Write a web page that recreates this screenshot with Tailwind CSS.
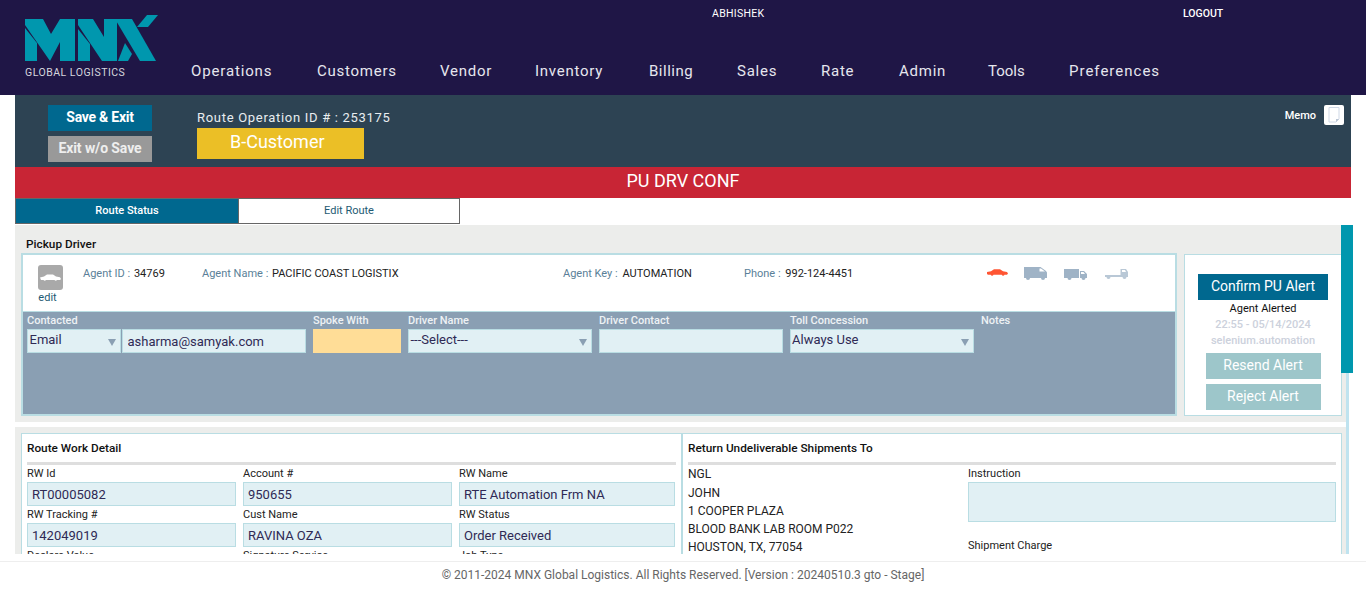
<!DOCTYPE html>
<html lang="en">
<head>
  <meta charset="UTF-8" />
  <title>Route Operation</title>
  <script src="https://cdn.jsdelivr.net/npm/@tailwindcss/browser@4"></script>
</head>
<body class="h-[589px] overflow-hidden bg-white font-[Roboto,sans-serif] text-[11px] text-[#222]">

  <!-- Top header -->
  <header class="h-[95px] bg-[#1f1646] flex text-white">
    <div class="w-[191px] pl-[24px] pt-[14px] shrink-0">
      <svg width="134" height="48" viewBox="24 14 134 48" class="block">
        <g fill="#0097ae">
          <polygon points="25,19 43,19 51,34 60,19 75,19 75,61 60,61 60,42 50,61 25,25" />
          <polygon points="25,28 37,43 37,61 25,61" />
          <polygon points="78,19 93,19 104,37 104,19 117,19 117,61 102,61 78,25" />
          <polygon points="78,29 90,44 90,61 78,61" />
          <polygon points="115,19 132,19 156,61 140,61" />
          <polygon points="125,43 132,54 128,61 118,61" />
          <polygon points="147,15 158,15 148,27 137,27" />
        </g>
      </svg>
      <div class="mt-[5px] ml-[1px] text-[10.5px] tracking-[0.5px] text-[#d5d5dd] leading-[12px] whitespace-nowrap">GLOBAL LOGISTICS</div>
    </div>
    <div class="flex-1 flex flex-col">
      <div class="flex h-[61px] pt-[7px] text-[10.5px] leading-[13px]">
        <span class="w-[992px] pl-[521px] tracking-[0.3px]">ABHISHEK</span>
        <span class="font-medium">LOGOUT</span>
      </div>
      <nav class="flex text-[15px] tracking-[0.75px] text-[#e6e6ee] leading-[20px]">
        <a href="#" class="w-[126px] tracking-[0.85px]">Operations</a>
        <a href="#" class="w-[123px]">Customers</a>
        <a href="#" class="w-[95px]">Vendor</a>
        <a href="#" class="w-[114px]">Inventory</a>
        <a href="#" class="w-[88px] tracking-[0.5px]">Billing</a>
        <a href="#" class="w-[84px]">Sales</a>
        <a href="#" class="w-[78px]">Rate</a>
        <a href="#" class="w-[89px]">Admin</a>
        <a href="#" class="w-[81px] tracking-[0px]">Tools</a>
        <a href="#" class="tracking-[1px]">Preferences</a>
      </nav>
    </div>
  </header>

  <div class="ml-[15px] w-[1336px]">
    <!-- Toolbar -->
    <div class="h-[72px] bg-[#2d4353] flex pl-[33px] pt-[10px] text-white">
      <div class="w-[104px] flex flex-col gap-[5px] shrink-0">
        <button class="h-[26px] pb-[2px] bg-[#00688f] text-[14px] font-bold tracking-[-0.25px]">Save &amp; Exit</button>
        <button class="h-[26px] pb-[2px] bg-[#999999] text-[14px] font-bold tracking-[-0.1px] text-[#eee]">Exit w/o Save</button>
      </div>
      <div class="ml-[45px] w-[200px]">
        <div class="text-[13px] tracking-[0.7px] leading-[16px] mt-[5px] whitespace-nowrap text-[#e8edf0]">Route Operation ID # : 253175</div>
        <div class="mt-[2px] h-[31px] w-[167px] bg-[#ebbf26] text-[18px] leading-[27px] pl-[33px]">B-Customer</div>
      </div>
      <div class="ml-auto mr-[7px] flex items-start gap-[8px]">
        <span class="text-[11px] font-medium leading-[21px]">Memo</span>
        <span class="w-[20px] h-[20px] bg-white rounded-[2px] flex items-center justify-center">
          <svg width="14" height="16" viewBox="0 0 14 16"><path d="M2 .5h10v11.500l-3 3H2z" fill="#fff" stroke="#cfd8e6"/><path d="M9 15l3-3H9z" fill="#bcc6d4"/></svg>
        </span>
      </div>
    </div>

    <div class="h-[31px] bg-[#c82535] text-white text-[18px] leading-[28px] text-center">PU DRV CONF</div>

    <!-- Tabs -->
    <div class="flex h-[26px] w-[445px] text-center leading-[23px]">
      <div class="w-[223px] bg-[#00688f] border-y border-l border-[#666] text-white font-medium">Route Status</div>
      <div class="flex-1 bg-white border border-[#666] text-[#1e5a73]">Edit Route</div>
    </div>
  </div>

  <!-- Scrolling content -->
  <div class="relative ml-[15px] w-[1334px] h-[329px] border-r-[3px] border-[#bfe3ef] mt-[1px]">
    <div class="h-full overflow-hidden">
      <section class="bg-[#ecedeb] h-[197px] pl-[6px] pr-[4px] flex flex-col">
        <div class="text-[11.800px] font-medium text-[#111] leading-[14px] pl-[5px] pt-[12px] h-[28px] shrink-0">Pickup Driver</div>
        <div class="flex gap-[7px]">
          <div class="w-[1156px] h-[163px] border-2 border-[#b9dde3] bg-white flex flex-col">
            <div class="h-[56px] relative flex shrink-0">
              <div class="w-[54px] pl-[15px] pt-[10px] shrink-0">
                <div class="w-[25px] h-[25px] rounded-[3px] bg-[#a9a9a9] flex items-center justify-center">
                  <svg width="21" height="7" viewBox="0 0 21 7"><path d="M0 3.500 4 2.500 7 .5h6l3 2 4 .8 1 1.700-1 1h-3a1.500 1.500 0 0 1-2.500 0H6a1.500 1.500 0 0 1-2.500 0H1z" fill="#fff"/></svg>
                </div>
                <div class="text-center w-[19px] ml-[0px] mt-[1px] leading-[14px] text-[#1e5a73]">edit</div>
              </div>
              <div class="flex pt-[12px] leading-[14px] text-[11px] whitespace-nowrap">
                <div class="w-[119px] ml-[6px]"><span class="text-[#5a7f98] mr-[1px]">Agent ID : </span>34769</div>
                <div class="w-[361px]"><span class="text-[#5a7f98] mr-[1px]">Agent Name : </span>PACIFIC COAST LOGISTIX</div>
                <div class="w-[181px]"><span class="text-[#5a7f98] mr-[2px]">Agent Key : </span>AUTOMATION</div>
                <div class="w-[243px]"><span class="text-[#5a7f98] mr-[2px]">Phone : </span>992-124-4451</div>
                <div class="flex items-start">
                  <svg width="21" height="7" viewBox="0 0 21 7" class="mt-[2px]"><path d="M0 5V3l4-.8L7 .3h6l3 2 4 .6 1 1.500-1 1.300h-2.500a1.500 1.500 0 0 1-2.800 0H6.500a1.500 1.500 0 0 1-2.800 0H1z" fill="#ff5533"/></svg>
                  <svg width="23" height="13" viewBox="0 0 23 13" class="ml-[16px]"><path d="M0 0h16.500L22 4l1 1.500V11h-2a2 2 0 0 1-4 0H6a2 2 0 0 1-4 0H0z" fill="#9fb3c6"/><path d="M15.500 1.500h1.500l4 3h-5.500z" fill="#fff"/></svg>
                  <svg width="23" height="12" viewBox="0 0 23 12" class="ml-[17px] mt-[1px]"><path d="M0 1h15v9H7.500a2 2 0 0 1-4 0H0zM16 3h4l3 3v4h-1.500a2 2 0 0 1-4 0H16z" fill="#9fb3c6"/><path d="M17 4h2.500l1.500 2h-4z" fill="#fff"/></svg>
                  <svg width="23" height="12" viewBox="0 0 23 12" class="ml-[18px] mt-[1px]"><path d="M0 7h15.500V1H21l2 3v5h-1.500a2 2 0 0 1-4 0H5.500a2 2 0 0 1-4 0H0z" fill="#b9c8d6"/><path d="M17 2h3l1 2h-4z" fill="#fff"/></svg>
                </div>
              </div>
            </div>
            <div class="flex-1 bg-[#8a9fb3] border-t border-[#b9dde3] pl-[4px] pt-[2px] text-[11px] text-[#eef2f5] font-medium leading-[13px]">
              <div class="flex">
                <label class="w-[286px]">Contacted</label>
                <label class="w-[95px]">Spoke With</label>
                <label class="w-[191px]">Driver Name</label>
                <label class="w-[191px]">Driver Contact</label>
                <label class="w-[191px]">Toll Concession</label>
                <label>Notes</label>
              </div>
              <div class="flex mt-[2px] text-[13px] font-normal text-[#2f2a55]">
                <div class="relative w-[94px] h-[24px] border border-[#b9dde3] bg-[#e1f0f4] pl-[1.500px] leading-[20px]">Email
                  <svg width="8" height="7" viewBox="0 0 8 7" class="absolute right-[4px] top-[9px]"><path d="M0 0h8L4 7z" fill="#8a9fb3"/></svg>
                </div>
                <input value="asharma@samyak.com" class="ml-[1px] w-[184px] h-[24px] border border-[#b9dde3] bg-[#e1f0f4] pl-[4.500px] outline-none" />
                <input class="ml-[7px] w-[88px] h-[24px] bg-[#ffdd97] outline-none" />
                <div class="relative ml-[7px] w-[184px] h-[24px] border border-[#b9dde3] bg-[#e1f0f4] pl-[1.500px] leading-[20px]">---Select---
                  <svg width="8" height="7" viewBox="0 0 8 7" class="absolute right-[4px] top-[9px]"><path d="M0 0h8L4 7z" fill="#8a9fb3"/></svg>
                </div>
                <input class="ml-[7px] w-[184px] h-[24px] border border-[#b9dde3] bg-[#e1f0f4] outline-none" />
                <div class="relative ml-[7px] w-[184px] h-[24px] border border-[#b9dde3] bg-[#e1f0f4] pl-[1px] leading-[20px]">Always Use
                  <svg width="8" height="7" viewBox="0 0 8 7" class="absolute right-[4px] top-[9px]"><path d="M0 0h8L4 7z" fill="#8a9fb3"/></svg>
                </div>
              </div>
            </div>
          </div>
          <div class="mt-[1px] w-[158px] h-[162px] border border-[#b9dde3] bg-white flex flex-col items-center pt-[19px] text-center">
            <button class="w-[130px] h-[26px] pb-[2px] bg-[#00688f] text-white text-[14px]">Confirm PU Alert</button>
            <div class="mt-[1px] leading-[16px] text-[#111]">Agent Alerted</div>
            <div class="leading-[16px] text-[#ccd1dc] font-medium">22:55 - 05/14/2024</div>
            <div class="leading-[16px] text-[#ccd1dc] font-medium">selenium.automation</div>
            <button class="mt-[4px] w-[115px] h-[26px] pb-[2px] bg-[#9dc6ca] text-white text-[14px]">Resend Alert</button>
            <button class="mt-[5px] w-[115px] h-[26px] pb-[2px] bg-[#9dc6ca] text-white text-[14px]">Reject Alert</button>
          </div>
        </div>
      </section>

      <section class="mt-[5px] bg-[#ecedeb] pt-[6px] pl-[6px] pr-[4px] h-[200px]">
        <div class="flex h-[180px] bg-white border border-[#b9dde3]">
          <div class="w-[661px] pl-[5px] pr-[5px] border-r-2 border-[#b9dde3] shrink-0">
            <h3 class="h-[28px] text-[11.800px] font-medium text-[#111] leading-[28px]">Route Work Detail</h3>
            <div class="h-[3px] bg-[#dedede]"></div>
            <div class="grid grid-cols-[209px_209px_216px] gap-x-[7px] mt-[2px] leading-[13px] text-[#222]">
              <div><div class="h-[13px]">RW Id</div><input value="RT00005082" class="mt-[2px] w-full h-[24px] border border-[#b9dde3] bg-[#e1f0f4] px-[4px] text-[13px] text-[#2f2a55] outline-none" /></div>
              <div><div class="h-[13px]">Account #</div><input value="950655" class="mt-[2px] w-full h-[24px] border border-[#b9dde3] bg-[#e1f0f4] px-[4px] text-[13px] text-[#2f2a55] outline-none" /></div>
              <div><div class="h-[13px]">RW Name</div><input value="RTE Automation Frm NA" class="mt-[2px] w-full h-[24px] border border-[#b9dde3] bg-[#e1f0f4] px-[4px] text-[13px] text-[#2f2a55] outline-none" /></div>
              <div class="mt-[2px]"><div class="h-[13px]">RW Tracking #</div><input value="142049019" class="mt-[2px] w-full h-[24px] border border-[#b9dde3] bg-[#e1f0f4] px-[4px] text-[13px] text-[#2f2a55] outline-none" /></div>
              <div class="mt-[2px]"><div class="h-[13px]">Cust Name</div><input value="RAVINA OZA" class="mt-[2px] w-full h-[24px] border border-[#b9dde3] bg-[#e1f0f4] px-[4px] text-[13px] text-[#2f2a55] outline-none" /></div>
              <div class="mt-[2px]"><div class="h-[13px]">RW Status</div><input value="Order Received" class="mt-[2px] w-full h-[24px] border border-[#b9dde3] bg-[#e1f0f4] px-[4px] text-[13px] text-[#2f2a55] outline-none" /></div>
              <div class="mt-[2px]">Declare Value</div>
              <div class="mt-[2px]">Signature Service</div>
              <div class="mt-[2px]">Job Type</div>
            </div>
          </div>
          <div class="flex-1 pl-[5px] pr-[5px]">
            <h3 class="h-[28px] text-[11.800px] font-medium text-[#111] leading-[28px]">Return Undeliverable Shipments To</h3>
            <div class="h-[3px] bg-[#dedede]"></div>
            <div class="flex">
              <div class="w-[280px] text-[12px] leading-[18px] text-[#222]">
                <div class="h-[19px]">NGL</div>
                <div>JOHN</div>
                <div>1 COOPER PLAZA</div>
                <div>BLOOD BANK LAB ROOM P022</div>
                <div>HOUSTON, TX, 77054</div>
              </div>
              <div class="flex-1 pt-[2px] leading-[13px]">
                <div class="h-[13px]">Instruction</div>
                <div class="mt-[2px] h-[40px] border border-[#b9dde3] bg-[#e1f0f4]"></div>
                <div class="mt-[17px]">Shipment Charge</div>
              </div>
            </div>
          </div>
        </div>
      </section>
    </div>
    <!-- scrollbar thumb -->
    <div class="absolute top-0 right-[-7px] w-[12px] h-[148px] bg-[#0097ae]"></div>
  </div>

  <footer class="mt-[7px] h-[28px] border-t border-[#eeeeee] text-center text-[12px] leading-[26px] text-[#666]">
    © 2011-2024 MNX Global Logistics. All Rights Reserved. [Version : 20240510.3 gto - Stage]
  </footer>
</body>
</html>
